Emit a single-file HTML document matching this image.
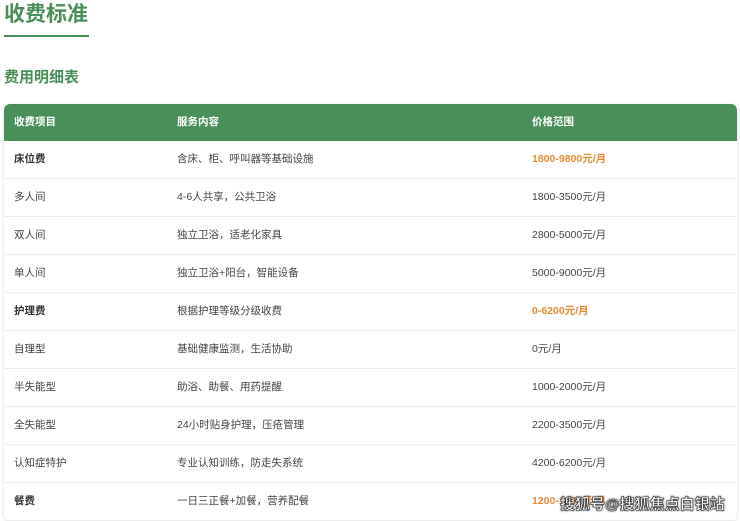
<!DOCTYPE html><html><head><meta charset="utf-8"><style>
body{margin:0;width:740px;height:521px;overflow:hidden;background:#fff;font-family:"Liberation Sans","Noto Sans CJK SC",sans-serif;position:relative}
h1{position:absolute;left:4px;top:1px;margin:0;font-size:21px;line-height:28px;color:#4a8f5a;font-weight:bold}
.ul{position:absolute;left:4px;top:35px;width:85px;height:2px;background:#4a8f5a}
h2{position:absolute;left:4px;top:67px;margin:0;font-size:15px;line-height:22px;color:#4a8f5a;font-weight:bold}
.t{position:absolute;left:4px;top:104px;width:733px;border-radius:6px;overflow:hidden;box-shadow:0 1px 3px rgba(0,0,0,.15)}
.r{height:38px;border-bottom:1px solid #ececec;position:relative;font-size:10.5px;color:#444;box-sizing:border-box}
.r span{position:absolute;top:0;line-height:37px}
.a{left:10px}.b{left:173px}.c{left:528px}
.h{background:#4a8f5a;color:#fff;font-weight:bold;height:37px;border:none}
.bo .a{font-weight:bold;color:#333}.bo .c{font-weight:bold;color:#e88b35}
.wm{position:absolute;left:560px;top:493px;font-size:15px;font-weight:bold;color:#fff;-webkit-text-stroke:0.6px #333;text-shadow:0 0 2px #000}
</style></head><body>
<h1>收费标准</h1><div class="ul"></div>
<h2>费用明细表</h2>
<div class="t">
<div class="r h"><span class="a">收费项目</span><span class="b">服务内容</span><span class="c">价格范围</span></div>
<div class="r bo"><span class="a">床位费</span><span class="b">含床、柜、呼叫器等基础设施</span><span class="c">1800-9800元/月</span></div>
<div class="r"><span class="a">多人间</span><span class="b">4-6人共享，公共卫浴</span><span class="c">1800-3500元/月</span></div>
<div class="r"><span class="a">双人间</span><span class="b">独立卫浴，适老化家具</span><span class="c">2800-5000元/月</span></div>
<div class="r"><span class="a">单人间</span><span class="b">独立卫浴+阳台，智能设备</span><span class="c">5000-9000元/月</span></div>
<div class="r bo"><span class="a">护理费</span><span class="b">根据护理等级分级收费</span><span class="c">0-6200元/月</span></div>
<div class="r"><span class="a">自理型</span><span class="b">基础健康监测，生活协助</span><span class="c">0元/月</span></div>
<div class="r"><span class="a">半失能型</span><span class="b">助浴、助餐、用药提醒</span><span class="c">1000-2000元/月</span></div>
<div class="r"><span class="a">全失能型</span><span class="b">24小时贴身护理，压疮管理</span><span class="c">2200-3500元/月</span></div>
<div class="r"><span class="a">认知症特护</span><span class="b">专业认知训练，防走失系统</span><span class="c">4200-6200元/月</span></div>
<div class="r bo"><span class="a">餐费</span><span class="b">一日三正餐+加餐，营养配餐</span><span class="c">1200-1800元/月</span></div>
</div>
<div class="wm">搜狐号@搜狐焦点白银站</div>
</body></html>
